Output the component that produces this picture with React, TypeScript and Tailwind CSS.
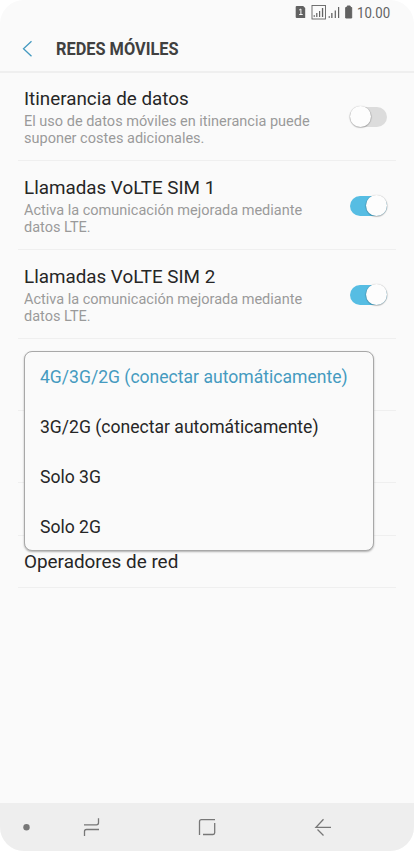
import React from "react";

function Toggle({ on }: { on?: boolean }) {
  return (
    <div className="relative mr-[9px] h-[22px] w-[37.5px] shrink-0">
      <div className={`absolute inset-x-0 top-px h-5 rounded-full ${on ? "bg-[#56bde3]" : "bg-[#dcdcdc]"}`} />
      <div
        className={`absolute top-0 size-[21.5px] rounded-full bg-[#fdfdfd] shadow-[0_0.5px_1px_0.5px_rgba(0,0,0,0.25)] ${on ? "right-0" : "left-0"}`}
      />
    </div>
  );
}

function Setting({ title, lines, on }: { title: string; lines: string[]; on?: boolean }) {
  return (
    <div className="flex h-[89px] justify-between border-b border-[#efefef] pl-[6px]">
      <div className="pt-4">
        <div className="origin-left scale-x-[0.985] text-[19.1px] leading-[22px] whitespace-nowrap text-[#262626]">
          <span>{title}</span>
        </div>
        <div className="w-[290px] origin-left scale-x-[0.967] pt-[3px] text-[15px] leading-[17px] whitespace-nowrap text-[#9a9a9a]">
          {lines.map((l) => (
            <div key={l}><span>{l}</span></div>
          ))}
        </div>
      </div>
      <div className="pt-[33.5px]">
        <Toggle on={on} />
      </div>
    </div>
  );
}

const options = ["4G/3G/2G (conectar automáticamente)", "3G/2G (conectar automáticamente)", "Solo 3G", "Solo 2G"];

export default function App() {
  return (
    <div className="h-[851px] w-[414px] bg-white font-['Roboto',sans-serif]">
      <div className="relative flex h-full flex-col overflow-hidden rounded-[24px] bg-[#fafafa]">
        <div className="flex h-[27px] shrink-0 items-center justify-end pr-[24px] text-[#626262]">
          <svg width="60" height="26" viewBox="-0.700 0 60 26" fill="currentColor" className="mr-[3px] mb-px">
            <path d="M2 6h6.500l2 2v10H2a1 1 0 0 1-1-1V7a1 1 0 0 1 1-1z" />
            <path d="M4.500 10 6.200 9v5M4.500 14.500h3.500" stroke="#fafafa" fill="none" />
            <rect x="17.300" y="5.500" width="13.500" height="13.500" fill="none" stroke="currentColor" strokeWidth="0.9" />
            <path d="M19 15h1v2h-1zM21.500 13h1.200v4h-1.200zM24.300 11h1.200v6h-1.200zM27.200 8h1.300v9h-1.300zM34 16h1v2h-1zM36.500 13h1.300v5h-1.300zM40 10.500h1.200v7.500h-1.200zM43.300 7h1.200v11h-1.200z" />
            <path d="M51 7.500h1.500V6h3v1.500H57V18h-6z" stroke="currentColor" strokeWidth="1" strokeLinejoin="round" />
          </svg>
          <span className="w-[33px] origin-left scale-x-[0.88] text-[15px] leading-none">10.00</span>
        </div>

        <header className="flex h-[46px] shrink-0 items-center border-b-2 border-[#efefef] pl-[22px]">
          <svg width="11" height="18" viewBox="0 0 11 18" fill="none" stroke="#459ac0" strokeWidth="1.3">
            <path d="M9.500 1.300 1.500 8.800l8 7.500" />
          </svg>
          <h1 className="ml-[23px] origin-left scale-x-[0.86] text-[19px] leading-[26px] font-bold whitespace-nowrap text-[#404040]">REDES MÓVILES</h1>
        </header>

        <main className="-mt-px mr-[18px] ml-[18px] grow">
          <Setting title="Itinerancia de datos" lines={["El uso de datos móviles en itinerancia puede", "suponer costes adicionales."]} />
          <Setting on title="Llamadas VoLTE SIM 1" lines={["Activa la comunicación mejorada mediante", "datos LTE."]} />
          <Setting on title="Llamadas VoLTE SIM 2" lines={["Activa la comunicación mejorada mediante", "datos LTE."]} />
          <div className="h-[72px] border-b border-[#efefef]" />
          <div className="h-[72px] border-b border-[#efefef]" />
          <div className="h-[53px] border-b border-[#efefef]" />
          <div className="flex h-[52px] items-center border-b border-[#efefef] pt-[2px] pl-[6px] text-[18.9px] text-[#262626]">
            <span>Operadores de red</span>
          </div>
        </main>

        <ul className="absolute top-[351px] left-[24px] h-[200px] w-[350px] rounded-[8px] border border-[#a8a8a8] bg-[#fafafa] shadow-[0_1px_2px_rgba(0,0,0,0.3)]">
          {options.map((o, i) => (
            <li key={o} className={`flex h-[50px] items-center pb-[2px] pl-[15px] text-[18px] whitespace-nowrap ${i === 0 ? "text-[#459ac0]" : "text-[#262626]"}`}>
              <span className="origin-left scale-x-[0.976]">{o}</span>
            </li>
          ))}
        </ul>

        <nav className="h-[48px] shrink-0 bg-[#eeeeee]">
          <svg width="414" height="48" viewBox="0 0 414 48" fill="none" stroke="#777" strokeWidth="1.3">
            <circle cx="26.500" cy="24.300" r="3.200" fill="#777" stroke="none" />
            <path d="M84 21.800h12.500q2 0 2-2v-4.500M84.500 33v-4.500q0-2 2-2H99" />
            <path d="M215 16.700h-13.500q-2 0-2 2V32M203 31.500h10q1.700 0 1.700-1.700V20" />
            <path d="M331 24.300h-15l7.500-8M317.500 26.500l6 6" />
          </svg>
        </nav>
      </div>
    </div>
  );
}
